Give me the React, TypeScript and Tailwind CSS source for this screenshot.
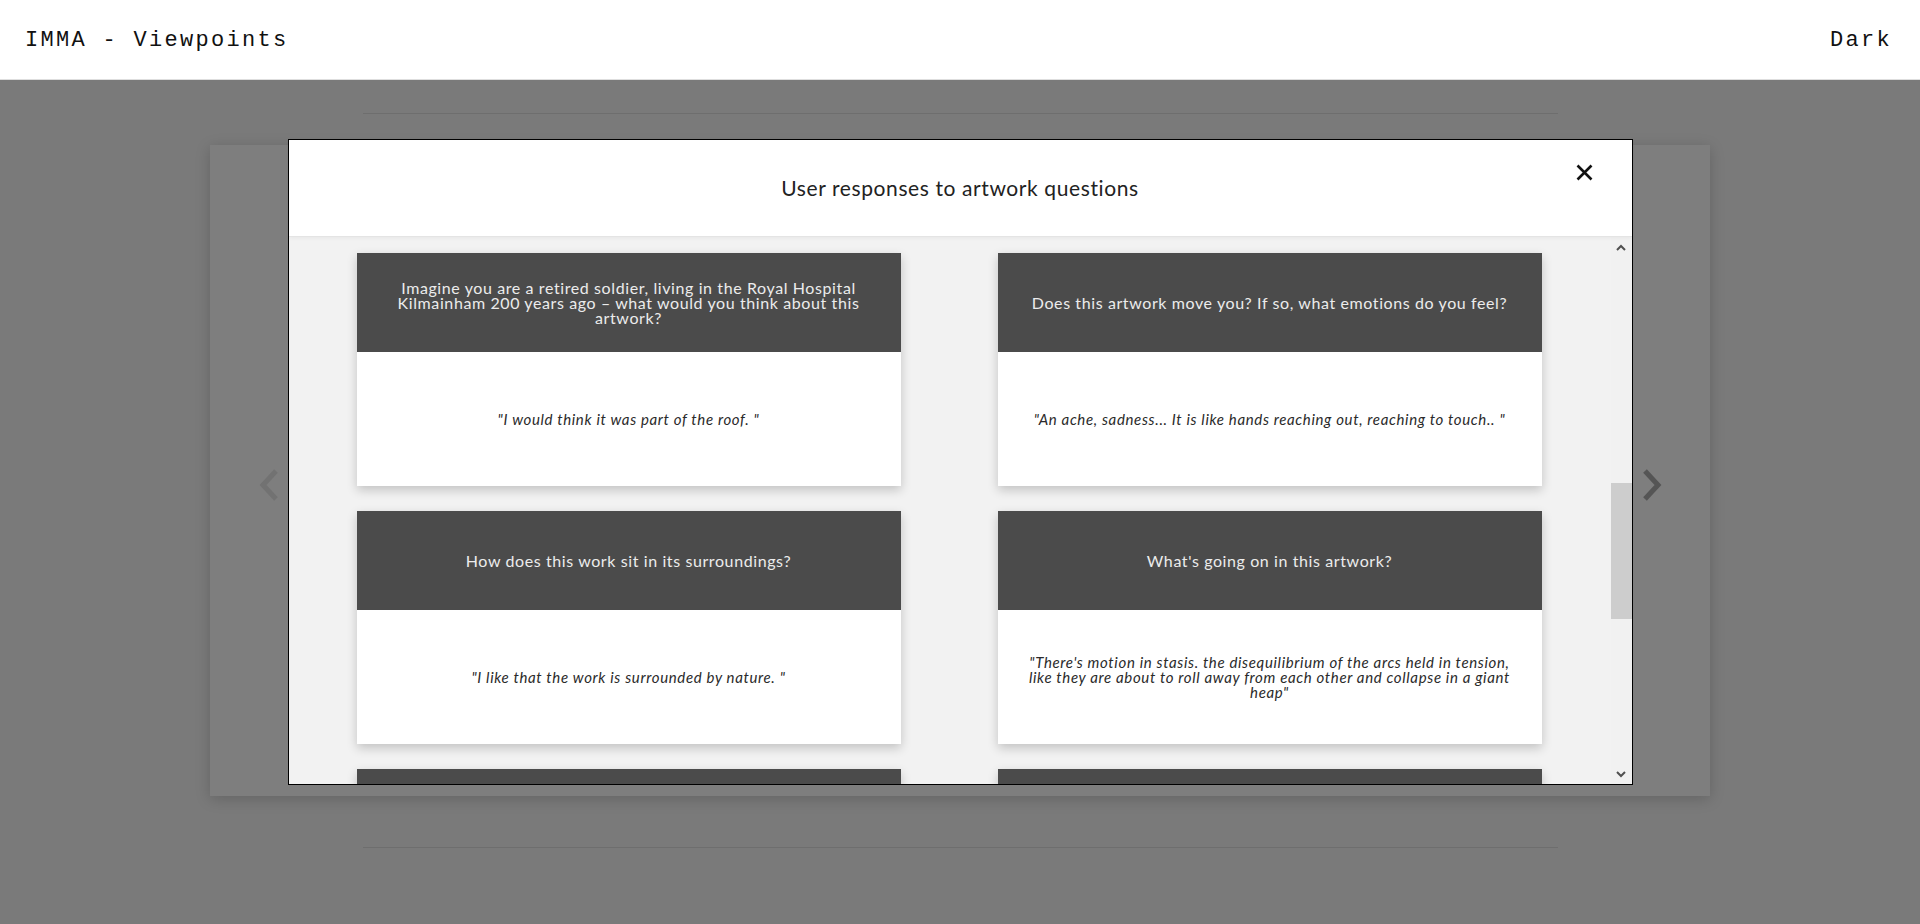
const responses = [
  {
    question:
      "Imagine you are a retired soldier, living in the Royal Hospital Kilmainham 200 years ago – what would you think about this artwork?",
    answer: "\"I would think it was part of the roof. \"",
  },
  {
    question: "Does this artwork move you? If so, what emotions do you feel?",
    answer: "\"An ache, sadness... It is like hands reaching out, reaching to touch.. \"",
  },
  {
    question: "How does this work sit in its surroundings?",
    answer: "\"I like that the work is surrounded by nature. \"",
  },
  {
    question: "What's going on in this artwork?",
    answer:
      "\"There's motion in stasis. the disequilibrium of the arcs held in tension, like they are about to roll away from each other and collapse in a giant heap\"",
  },
  { question: "", answer: "" },
  { question: "", answer: "" },
];

const Chevron = ({ dir, className }: { dir: "left" | "right"; className: string }) => (
  <svg width="22" height="34" viewBox="0 0 22 34" className={className}>
    <polyline
      points={dir === "left" ? "18,3 5,17 18,31" : "4,3 17,17 4,31"}
      fill="none"
      stroke="currentColor"
      strokeWidth="5"
    />
  </svg>
);

const ScrollArrow = ({ up }: { up?: boolean }) => (
  <svg width="10" height="7" viewBox="0 0 10 7" className="text-[#505050]">
    <polyline
      points={up ? "1,6 5,2 9,6" : "1,1 5,5 9,1"}
      fill="none"
      stroke="currentColor"
      strokeWidth="2"
    />
  </svg>
);

const App = () => {
  return (
    <div className="h-[924px] w-full flex flex-col overflow-hidden" style={{ fontFamily: "Lato, 'Noto Sans', sans-serif" }}>
      {/* Top bar */}
      <header className="h-[80px] shrink-0 bg-white border-b border-[#dedede] flex items-center justify-between pl-[25px] pr-[28px] pt-[1px]">
        <span className="text-[22px] tracking-[2.3px] text-[#111]" style={{ fontFamily: "'Liberation Mono', monospace" }}>
          IMMA - Viewpoints
        </span>
        <span className="text-[22px] tracking-[2.3px] text-[#111]" style={{ fontFamily: "'Liberation Mono', monospace" }}>
          Dark
        </span>
      </header>

      <main className="relative flex-1 bg-[#7a7a7a] flex flex-col items-center">
        {/* Page behind the overlay */}
        <div className="mt-[33px] w-[1195px] h-px bg-[#6e6e6e]" />
        <div className="mt-[31px] w-[1500px] h-[651px] bg-[#7e7e7e] shadow-[0_3px_14px_rgba(0,0,0,0.18)] flex items-center justify-between pl-[48px] pr-[47px] pt-[28px]">
          <Chevron dir="left" className="text-[#727272]" />
          <Chevron dir="right" className="text-[#555555]" />
        </div>
        <div className="mt-[51px] w-[1195px] h-px bg-[#6e6e6e]" />

        {/* Modal */}
        <div className="absolute inset-0 flex justify-center pt-[59px]">
          <div className="w-[1345px] h-[646px] border border-black bg-white flex flex-col">
            <div className="h-[97px] shrink-0 relative flex items-center justify-center border-b border-[#e4e4e4] shadow-[0_1px_4px_rgba(0,0,0,0.05)] z-10">
              <h2 className="text-[21px] tracking-[0.6px] text-[#222] pb-[1px]">User responses to artwork questions</h2>
              <button className="absolute right-[36px] top-[21px] w-[22px] h-[22px] flex items-center justify-center">
                <svg width="17" height="17" viewBox="0 0 17 17">
                  <path d="M1.5 1.5 L15.5 15.5 M15.5 1.5 L1.5 15.5" stroke="#111" strokeWidth="2.6" />
                </svg>
              </button>
            </div>

            <div className="flex-1 flex min-h-0">
              <div className="flex-1 bg-[#f2f2f2] overflow-hidden pl-[68px] pt-[16px]">
                <div className="grid grid-cols-[544px_544px] gap-x-[97px] gap-y-[25px]">
                  {responses.map((r, i) => (
                    <div key={i} className="bg-white shadow-[0_4px_10px_rgba(0,0,0,0.2)]">
                      <div className="h-[99px] bg-[#4b4b4b] flex items-center justify-center px-[24px]">
                        <p className="text-[16px] leading-[15px] tracking-[0.6px] text-[#ececec] text-center">{r.question}</p>
                      </div>
                      <div className="h-[134px] flex items-center justify-center px-[30px]">
                        <p className="text-[15px] leading-[15px] tracking-[0.65px] italic text-[#2a2a2a] text-center">{r.answer}</p>
                      </div>
                    </div>
                  ))}
                </div>
              </div>

              {/* Scrollbar */}
              <div className="w-[21px] shrink-0 bg-[#f1f1f1] flex flex-col items-center">
                <div className="h-[17px] flex items-center justify-center pt-[3px]">
                  <ScrollArrow up />
                </div>
                <div className="flex-1 w-full flex flex-col">
                  <div className="h-[229px]" />
                  <div className="h-[136px] w-full bg-[#cdcdcd]" />
                </div>
                <div className="h-[17px] flex items-center justify-center pb-[3px]">
                  <ScrollArrow />
                </div>
              </div>
            </div>
          </div>
        </div>
      </main>
    </div>
  );
};

export default App;
